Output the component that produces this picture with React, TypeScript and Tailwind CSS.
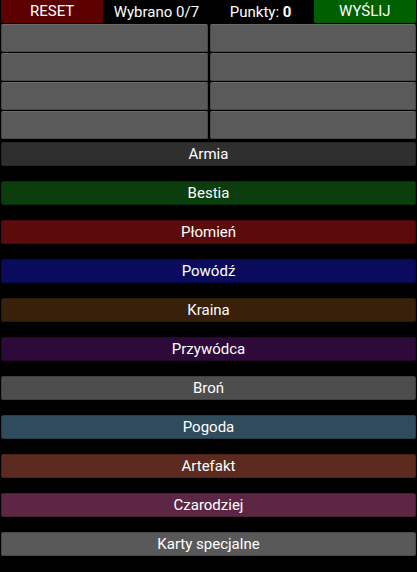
import React from "react";

const cats: { name: string; cls: string }[] = [
  { name: "Armia", cls: "bg-[#2f2f2f] border-[#262626]" },
  { name: "Bestia", cls: "bg-[#0c3d0c] border-[#0a300a]" },
  { name: "Płomień", cls: "bg-[#5c0b0b] border-[#4a0808]" },
  { name: "Powódź", cls: "bg-[#0b0b5e] border-[#08084a]" },
  { name: "Kraina", cls: "bg-[#38200b] border-[#2c1908]" },
  { name: "Przywódca", cls: "bg-[#2e0a3a] border-[#24082e]" },
  { name: "Broń", cls: "bg-[#4d4d4d] border-[#3f3f3f]" },
  { name: "Pogoda", cls: "bg-[#2f4b5c] border-[#263d4b]" },
  { name: "Artefakt", cls: "bg-[#5c2a1f] border-[#4a2219]" },
  { name: "Czarodziej", cls: "bg-[#5c2644] border-[#4a1e37]" },
  { name: "Karty specjalne", cls: "bg-[#595959] border-[#4a4a4a]" },
];

export default function App() {
  return (
    <div
      className="w-[417px] h-[572px] bg-black text-white overflow-hidden"
      style={{ fontFamily: "Roboto, 'Liberation Sans', sans-serif" }}
    >
      <div className="grid grid-cols-4 h-[24px] text-[15px]">
        <div className="px-[1px] pb-[1px]">
          <button className="w-full h-full bg-[#5c0000] rounded-b-[2px] flex items-center justify-center">
            RESET
          </button>
        </div>
        <div className="flex items-center justify-center">Wybrano 0/7</div>
        <div className="flex items-center justify-center">
          Punkty:&nbsp;<span className="font-bold">0</span>
        </div>
        <div className="px-[1px] pb-[1px]">
          <button className="w-full h-full bg-[#006000] rounded-b-[2px] flex items-center justify-center">
            WYŚLIJ
          </button>
        </div>
      </div>
      <div className="grid grid-cols-2 gap-x-[2px] gap-y-[1px] px-[1px]">
        {Array.from({ length: 8 }).map((_, i) => (
          <div
            key={i}
            className="h-[28px] bg-[#5a5a5a] border border-[#4a4a4a] border-t-[#6a6a6a] rounded-[2px]"
          />
        ))}
      </div>
      <div className="flex flex-col gap-[15px] px-[1px] pt-[3px]">
        {cats.map((c) => (
          <div
            key={c.name}
            className={`h-[24px] border rounded-[2px] flex items-center justify-center text-[15px] ${c.cls}`}
          >
            {c.name}
          </div>
        ))}
      </div>
    </div>
  );
}
